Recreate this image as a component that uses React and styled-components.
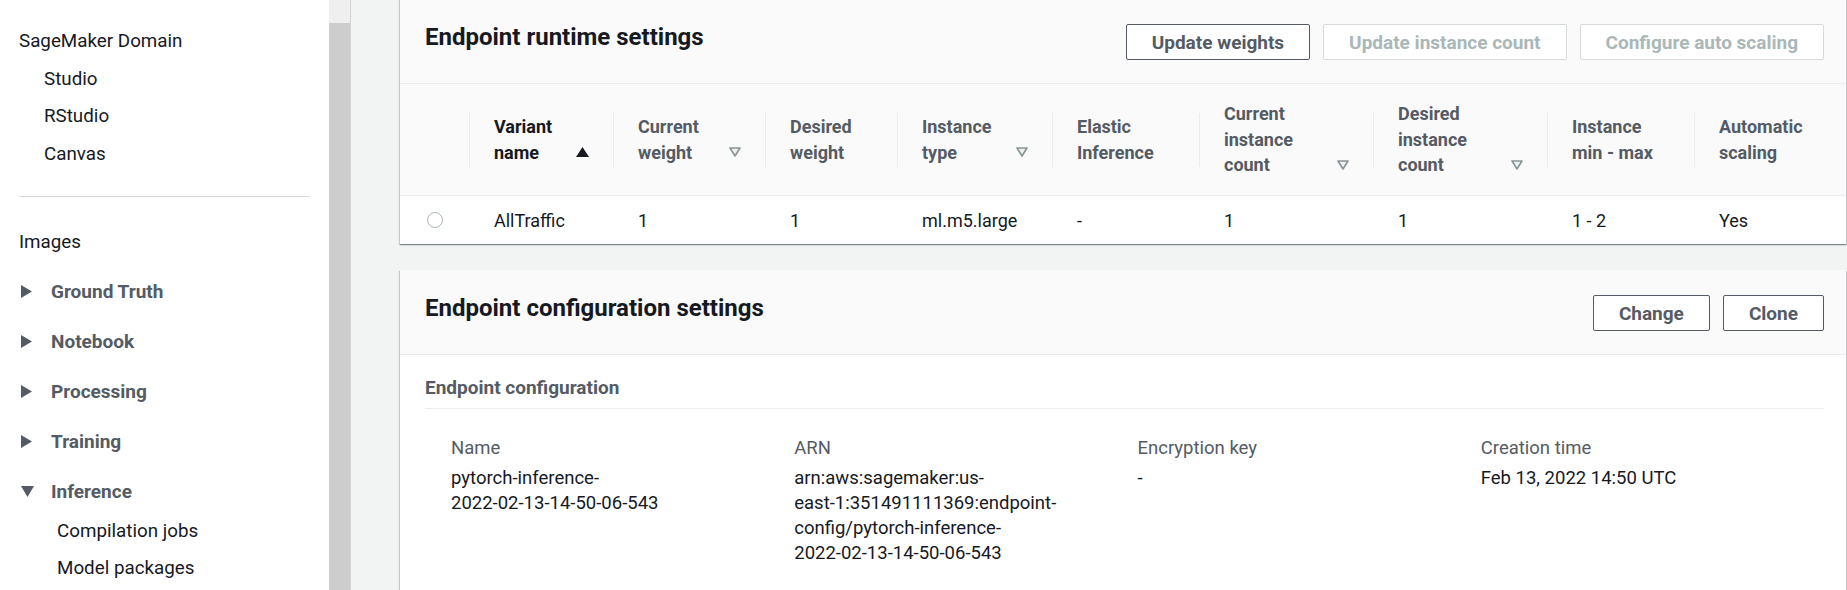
import React from 'react'
import styled, { createGlobalStyle } from 'styled-components'

const GlobalStyle = createGlobalStyle`
  body {
    margin: 0;
    font-family: Roboto, 'Open Sans', sans-serif;
    overflow: hidden;
  }
`

const Layout = styled.div`
  display: flex;
  height: 590px;
  overflow: hidden;
`

const Sidebar = styled.nav`
  width: 329px;
  flex-shrink: 0;
  box-sizing: border-box;
  padding: 22px 19px 0;
  background: #fff;
`

const NavItem = styled.div`
  display: flex;
  align-items: center;
  height: ${p => p.$h || 37.5}px;
  padding-left: ${p => p.$indent || 0}px;
  font-size: 18.8px;
  color: #16191f;
  margin-top: ${p => p.$mt || 0}px;
`

const Divider = styled.hr`
  border: 0;
  border-top: 1px solid #d5dbdb;
  margin: 23px 0 0;
`

const SectionHead = styled.div`
  display: flex;
  align-items: center;
  height: 50px;
  font-size: 19px;
  font-weight: 700;
  color: #545b64;
`

const Caret = styled.span`
  width: 32px;
  padding-left: 2px;
  box-sizing: border-box;
  display: flex;
  align-items: center;
`

const SubList = styled.div`
  margin-top: -5px;
`

const Track = styled.div`
  width: 21px;
  flex-shrink: 0;
  background: #cdcdcd;
`

const TrackCap = styled.div`
  height: 23px;
  background: #efefef;
`

const Main = styled.main`
  flex: 1;
  background: #f2f3f3;
  border-left: 1px solid #d3d5d6;
  padding: 0 1px 0 49px;
`

const Card = styled.section`
  background: #fff;
  margin-top: ${p => p.$mt}px;
  box-shadow: 0 1px 1px 0 rgba(0, 28, 36, 0.3), 1px 1px 1px 0 rgba(0, 28, 36, 0.15),
    -1px 1px 1px 0 rgba(0, 28, 36, 0.15);
`

const CardHeader = styled.header`
  display: flex;
  justify-content: space-between;
  align-items: flex-start;
  padding: 25px 22px 23px 25px;
  background: #fafafa;
  border-bottom: 1px solid #eaeded;
`

const Title = styled.h2`
  margin: 0;
  font-size: 24px;
  line-height: 26px;
  font-weight: 700;
  color: #16191f;
`

const Buttons = styled.div`
  display: flex;
  gap: 13px;
`

const Button = styled.button`
  height: 36px;
  padding: 0 25px;
  background: #fff;
  border: 1px solid ${p => (p.disabled ? '#d5dbdb' : '#545b64')};
  border-radius: 2px;
  color: ${p => (p.disabled ? '#aab7b8' : '#545b64')};
  font-family: inherit;
  font-size: 19px;
  font-weight: 700;
  cursor: ${p => (p.disabled ? 'default' : 'pointer')};
`

const cols = '69px 144px 152px 132px 155px 147px 174px 174px 147px 1fr'

const HeadRow = styled.div`
  display: grid;
  grid-template-columns: ${cols};
  align-items: center;
  height: 111px;
  background: #fafafa;
  border-bottom: 1px solid #eaeded;
`

const HeadCell = styled.div`
  display: flex;
  align-items: center;
  height: 54px;
  padding: 0 24px;
  border-left: 1px solid #eaeded;
`

const HeadInner = styled.div`
  display: flex;
  align-items: flex-end;
  justify-content: space-between;
  width: 100%;
`

const HeadLabel = styled.span`
  font-size: 18px;
  line-height: 25.5px;
  font-weight: 700;
  color: ${p => (p.$active ? '#16191f' : '#545b64')};
`

const SortIcon = styled.svg`
  flex-shrink: 0;
  margin-bottom: 8px;
`

const BodyRow = styled.div`
  display: grid;
  grid-template-columns: ${cols};
  align-items: center;
  height: 48px;
  background: #fff;
`

const Cell = styled.div`
  padding-left: 25px;
  font-size: 18px;
  color: #16191f;
`

const RadioCell = styled.div`
  display: flex;
  justify-content: center;
`

const Radio = styled.span`
  width: 14px;
  height: 14px;
  border: 1.5px solid #aab7b8;
  border-radius: 50%;
  background: #fff;
`

const CardBody = styled.div`
  padding: 20px 22px 60px 25px;
`

const SubHeading = styled.h3`
  margin: 0;
  padding-bottom: 8px;
  border-bottom: 1px solid #eaeded;
  font-size: 19px;
  line-height: 25px;
  font-weight: 700;
  color: #545b64;
`

const Details = styled.div`
  display: grid;
  grid-template-columns: repeat(4, 1fr);
  padding: 27px 0 0 26px;
`

const Label = styled.div`
  font-size: 18.5px;
  line-height: 25px;
  color: #545b64;
`

const Value = styled.div`
  margin-top: 5px;
  font-size: 18.5px;
  line-height: 25px;
  color: #16191f;
`

const RightTri = () => (
  <svg width="11" height="13" viewBox="0 0 11 13">
    <polygon points="0,0 11,6.5 0,13" fill="#545b64" />
  </svg>
)

const DownTri = () => (
  <svg width="13" height="11" viewBox="0 0 13 11">
    <polygon points="0,0 13,0 6.5,11" fill="#545b64" />
  </svg>
)

const SortUp = () => (
  <SortIcon width="13" height="10" viewBox="0 0 13 10">
    <polygon points="6.5,0 13,10 0,10" fill="#16191f" />
  </SortIcon>
)

const SortDown = () => (
  <SortIcon width="12" height="10" viewBox="0 0 12 10">
    <polygon points="1,1 11,1 6,9" fill="#eef0f0" stroke="#879596" strokeWidth="1.6" strokeLinejoin="round" />
  </SortIcon>
)

const sections = ['Ground Truth', 'Notebook', 'Processing', 'Training']

const headers = [
  { label: ['Variant', 'name'], sort: 'up', active: true },
  { label: ['Current', 'weight'], sort: 'down' },
  { label: ['Desired', 'weight'] },
  { label: ['Instance', 'type'], sort: 'down' },
  { label: ['Elastic', 'Inference'] },
  { label: ['Current', 'instance', 'count'], sort: 'down' },
  { label: ['Desired', 'instance', 'count'], sort: 'down' },
  { label: ['Instance', 'min - max'] },
  { label: ['Automatic', 'scaling'] },
]

const row = ['AllTraffic', '1', '1', 'ml.m5.large', '-', '1', '1', '1 - 2', 'Yes']

const App = () => {
  return (
    <>
      <GlobalStyle />
      <Layout>
        <Sidebar>
          <NavItem $h={38}>SageMaker Domain</NavItem>
          <NavItem $indent={25}>Studio</NavItem>
          <NavItem $indent={25}>RStudio</NavItem>
          <NavItem $indent={25}>Canvas</NavItem>
          <Divider />
          <NavItem $h={38} $mt={26}>Images</NavItem>
          <div style={{ marginTop: 6 }}>
            {sections.map(s => (
              <SectionHead key={s}>
                <Caret><RightTri /></Caret>
                {s}
              </SectionHead>
            ))}
            <SectionHead>
              <Caret><DownTri /></Caret>
              Inference
            </SectionHead>
            <SubList>
              <NavItem $indent={38} $h={38}>Compilation jobs</NavItem>
              <NavItem $indent={38} $h={37}>Model packages</NavItem>
            </SubList>
          </div>
        </Sidebar>
        <Track>
          <TrackCap />
        </Track>
        <Main>
          <Card $mt={-1}>
            <CardHeader>
              <Title>Endpoint runtime settings</Title>
              <Buttons>
                <Button>Update weights</Button>
                <Button disabled>Update instance count</Button>
                <Button disabled>Configure auto scaling</Button>
              </Buttons>
            </CardHeader>
            <HeadRow>
              <div />
              {headers.map((h, i) => (
                <HeadCell key={i}>
                  <HeadInner>
                    <HeadLabel $active={h.active}>
                      {h.label.map((l, j) => (
                        <React.Fragment key={j}>
                          {j > 0 && <br />}
                          {l}
                        </React.Fragment>
                      ))}
                    </HeadLabel>
                    {h.sort === 'up' && <SortUp />}
                    {h.sort === 'down' && <SortDown />}
                  </HeadInner>
                </HeadCell>
              ))}
            </HeadRow>
            <BodyRow>
              <RadioCell><Radio /></RadioCell>
              {row.map((v, i) => (
                <Cell key={i}>{v}</Cell>
              ))}
            </BodyRow>
          </Card>

          <Card $mt={26}>
            <CardHeader>
              <Title>Endpoint configuration settings</Title>
              <Buttons>
                <Button>Change</Button>
                <Button>Clone</Button>
              </Buttons>
            </CardHeader>
            <CardBody>
              <SubHeading>Endpoint configuration</SubHeading>
              <Details>
                <div>
                  <Label>Name</Label>
                  <Value>pytorch-inference-<br />2022-02-13-14-50-06-543</Value>
                </div>
                <div>
                  <Label>ARN</Label>
                  <Value>
                    arn:aws:sagemaker:us-<br />
                    east-1:351491111369:endpoint-<br />
                    config/pytorch-inference-<br />
                    2022-02-13-14-50-06-543
                  </Value>
                </div>
                <div>
                  <Label>Encryption key</Label>
                  <Value>-</Value>
                </div>
                <div>
                  <Label>Creation time</Label>
                  <Value>Feb 13, 2022 14:50 UTC</Value>
                </div>
              </Details>
            </CardBody>
          </Card>
        </Main>
      </Layout>
    </>
  )
}

export default App
